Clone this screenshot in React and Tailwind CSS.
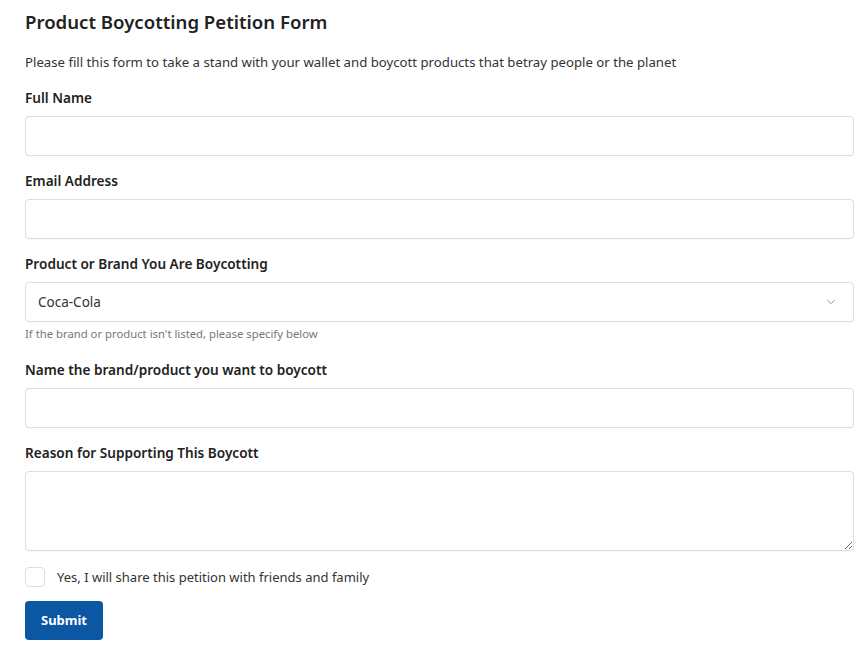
import React, { useState } from 'react';
import { ChevronDown } from 'lucide-react';

const labelCls = 'block text-[13.6px] leading-5 font-semibold text-[#222]';
const inputCls =
  'block w-full h-10 bg-white border border-[#dedede] rounded-[4px] px-3 text-[13.5px] text-[#333] outline-none shadow-[0_1px_1px_rgba(0,0,0,0.03)]';

const App = () => {
  const [brand, setBrand] = useState('Coca-Cola');
  const [share, setShare] = useState(false);

  return (
    <div className="min-h-screen bg-white font-['Noto_Sans',sans-serif] text-[#222] antialiased">
      <form className="w-[829px] ml-[25px] pt-[10px]" onSubmit={(e) => e.preventDefault()}>
        <h1 className="text-[18.6px] leading-6 font-semibold text-[#222]">Product Boycotting Petition Form</h1>
        <p className="mt-[19px] text-[13.2px] leading-[18px] text-[#333]">
          Please fill this form to take a stand with your wallet and boycott products that betray people or the planet
        </p>

        <label className={`${labelCls} mt-[17px]`}>Full Name</label>
        <input type="text" className={`${inputCls} mt-2`} />

        <label className={`${labelCls} mt-[15px]`}>Email Address</label>
        <input type="email" className={`${inputCls} mt-2`} />

        <label className={`${labelCls} mt-[15px]`}>Product or Brand You Are Boycotting</label>
        <div className="relative mt-2">
          <select
            value={brand}
            onChange={(e) => setBrand(e.target.value)}
            className={`${inputCls} appearance-none pr-10`}
          >
            <option>Coca-Cola</option>
            <option>Nestlé</option>
            <option>Amazon</option>
            <option>Other</option>
          </select>
          <ChevronDown
            size={14}
            strokeWidth={1.5}
            className="absolute right-[16px] top-1/2 -translate-y-1/2 text-[#888] pointer-events-none"
          />
        </div>
        <p className="mt-[6px] text-[11.3px] leading-3 text-[#777]">
          If the brand or product isn't listed, please specify below
        </p>

        <label className={`${labelCls} mt-5`}>Name the brand/product you want to boycott</label>
        <input type="text" className={`${inputCls} mt-2`} />

        <label className={`${labelCls} mt-[15px]`}>Reason for Supporting This Boycott</label>
        <textarea className={`${inputCls} mt-2 h-20 py-2`} />

        <label className="mt-4 flex items-center gap-[12px] cursor-pointer">
          <input
            type="checkbox"
            checked={share}
            onChange={(e) => setShare(e.target.checked)}
            className="appearance-none w-5 h-5 border border-[#dedede] rounded-[4px] bg-white checked:bg-[#0b57a4] checked:border-[#0b57a4]"
          />
          <span className="text-[13px] leading-5 text-[#333]">Yes, I will share this petition with friends and family</span>
        </label>

        <button
          type="submit"
          className="mt-[14px] h-[39px] w-[78px] bg-[#0b57a4] hover:bg-[#094a8c] text-white text-[13px] font-bold rounded-[4px]"
        >
          Submit
        </button>
      </form>
    </div>
  );
};

export default App;
